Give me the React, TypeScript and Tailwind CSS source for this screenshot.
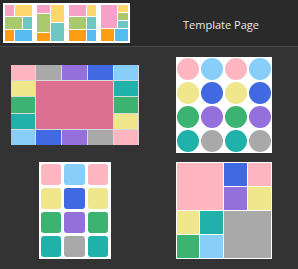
const pink = 'bg-[#ffb6c1]'
const sky = 'bg-[#87cefa]'
const khaki = 'bg-[#f0e68c]'
const royal = 'bg-[#4169e1]'
const green = 'bg-[#3cb371]'
const purple = 'bg-[#9370db]'
const teal = 'bg-[#20b2aa]'
const gray = 'bg-[#a9a9a9]'

function Cell({ c, className = '' }: { c: string; className?: string }) {
    return <div className={`${c} ${className}`} />
}

function Thumbs() {
    return (
        <div className="flex gap-[5px] bg-white p-[2px]">
            {/* thumb 1 */}
            <div className="flex w-[27px] h-[36px] flex-col gap-px">
                <div className="flex h-[11px] gap-px">
                    <Cell c="bg-[#f7a1c8]" className="w-[9px]" />
                    <Cell c="bg-[#fdd66c]" className="flex-1" />
                </div>
                <div className="flex h-[12px] gap-px">
                    <Cell c="bg-[#a9c96c]" className="flex-1" />
                    <Cell c="bg-[#6fc7c1]" className="w-[9px]" />
                </div>
                <div className="flex flex-1 gap-px">
                    <Cell c="bg-[#ff9d16]" className="w-[9px]" />
                    <Cell c="bg-[#56bcef]" className="flex-1" />
                </div>
            </div>
            {/* thumb 2 */}
            <div className="flex w-[27px] h-[36px] gap-px">
                <div className="flex w-[13px] flex-col gap-px">
                    <Cell c="bg-[#f7a1c8]" className="h-[8px]" />
                    <Cell c="bg-[#a9c96c]" className="flex-1" />
                    <Cell c="bg-[#ff9d16]" className="h-[8px]" />
                </div>
                <div className="flex flex-1 flex-col gap-px">
                    <Cell c="bg-[#fdd66c]" className="h-[17px]" />
                    <Cell c="bg-[#6fc7c1]" className="flex-1" />
                </div>
            </div>
            {/* thumb 3 */}
            <div className="flex w-[27px] h-[36px] flex-col gap-px">
                <div className="flex h-[11px] gap-px">
                    <Cell c="bg-[#f7a1c8]" className="flex-1" />
                    <Cell c="bg-[#fdd66c]" className="w-[9px]" />
                </div>
                <div className="flex h-[12px] gap-px">
                    <Cell c="bg-[#a9c96c]" className="flex-1" />
                    <Cell c="bg-[#6fc7c1]" className="w-[9px]" />
                </div>
                <div className="flex flex-1 gap-px">
                    <Cell c="bg-[#ff9d16]" className="flex-1" />
                    <Cell c="bg-[#56bcef]" className="w-[9px]" />
                </div>
            </div>
            {/* thumb 4 */}
            <div className="flex w-[27px] h-[36px] flex-col gap-px">
                <div className="flex h-[23px] gap-px">
                    <Cell c="bg-[#f7a1c8]" className="w-[16px]" />
                    <div className="flex flex-1 flex-col gap-px">
                        <Cell c="bg-[#fdd66c]" className="flex-1" />
                        <Cell c="bg-[#a9c96c]" className="flex-1" />
                        <Cell c="bg-[#6fc7c1]" className="flex-1" />
                    </div>
                </div>
                <div className="flex flex-1 gap-px">
                    <Cell c="bg-[#ff9d16]" className="w-[13px]" />
                    <Cell c="bg-[#56bcef]" className="flex-1" />
                </div>
            </div>
        </div>
    )
}

function BorderLayout() {
    return (
        <div className="grid h-[80px] w-[128px] grid-cols-5 grid-rows-5 gap-px bg-[#d9d9d9]">
            <Cell c={pink} />
            <Cell c={gray} />
            <Cell c={purple} />
            <Cell c={royal} />
            <Cell c={sky} />
            <Cell c={khaki} />
            <Cell c="bg-[#db7093]" className="col-span-3 row-span-3" />
            <Cell c={teal} />
            <Cell c={green} />
            <Cell c={green} />
            <Cell c={teal} />
            <Cell c={khaki} />
            <Cell c={sky} />
            <Cell c={royal} />
            <Cell c={purple} />
            <Cell c={gray} />
            <Cell c={pink} />
        </div>
    )
}

function Circles() {
    const colors = [pink, sky, pink, sky, khaki, royal, khaki, royal, green, purple, green, purple, teal, gray, teal, gray]
    return (
        <div className="grid h-[96px] w-[96px] grid-cols-4 grid-rows-4 bg-white">
            {colors.map((c, i) => (
                <div key={i} className="flex items-center justify-center">
                    <div className={`h-[22px] w-[22px] rounded-full ${c}`} />
                </div>
            ))}
        </div>
    )
}

function Squares() {
    const colors = [pink, sky, pink, khaki, royal, khaki, green, purple, green, teal, gray, teal]
    return (
        <div className="grid h-[97px] w-[72px] grid-cols-3 grid-rows-4 gap-[3px] bg-white p-[2px]">
            {colors.map((c, i) => (
                <div key={i} className={`rounded-[3px] ${c}`} />
            ))}
        </div>
    )
}

function Mosaic() {
    return (
        <div className="grid h-[97px] w-[96px] grid-cols-2 grid-rows-2 gap-px bg-white p-px">
            <Cell c={pink} />
            <div className="grid grid-cols-2 grid-rows-2 gap-px">
                <Cell c={royal} />
                <Cell c={pink} />
                <Cell c={purple} />
                <Cell c={khaki} />
            </div>
            <div className="grid grid-cols-2 grid-rows-2 gap-px">
                <Cell c={khaki} />
                <Cell c={teal} />
                <Cell c={green} />
                <Cell c={sky} />
            </div>
            <Cell c={gray} />
        </div>
    )
}

export default function App() {
    return (
        <div className="flex h-[269px] w-[298px] flex-col overflow-hidden bg-[#333333]" style={{ fontFamily: '"Open Sans", sans-serif' }}>
            <header className="flex h-[47px] border-b border-[#4a4a4a] bg-[#2a2a2a]">
                <div className="pl-[3px] pt-[3px]">
                    <Thumbs />
                </div>
                <div className="flex flex-1 items-center justify-center pl-[14px] pt-[4px] text-[11px] text-[#e8e8e8]">
                    Template Page
                </div>
            </header>
            <main className="grid grid-cols-2 gap-y-[9px] pt-[10px]">
                <div className="flex h-[96px] items-center justify-center">
                    <BorderLayout />
                </div>
                <div className="flex h-[96px] items-center justify-center">
                    <Circles />
                </div>
                <div className="flex justify-center">
                    <Squares />
                </div>
                <div className="flex justify-center">
                    <Mosaic />
                </div>
            </main>
        </div>
    )
}
